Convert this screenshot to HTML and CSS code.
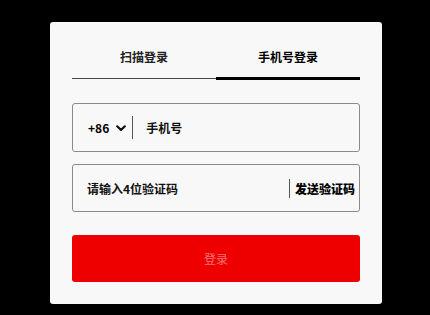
FILE: index.html
```html
<!DOCTYPE html>
<html lang="zh-CN">
<head>
<meta charset="utf-8">
<link rel="stylesheet" href="styles.css">
</head>
<body>
<div class="card">
  <div class="tabs">
    <div class="tab">扫描登录</div>
    <div class="tab active">手机号登录</div>
  </div>
  <div class="field phone">
    <span class="code">+86</span>
    <svg class="chev" width="10" height="7" viewBox="0 0 10 7"><path d="M1.2 1.3 L5 5 L8.8 1.3" fill="none" stroke="#111" stroke-width="2.2" stroke-linecap="round" stroke-linejoin="round"/></svg>
    <span class="divider tall"></span>
    <span class="ph">手机号</span>
  </div>
  <div class="field sms">
    <span class="ph grow">请输入4位验证码</span>
    <span class="divider"></span>
    <span class="send">发送验证码</span>
  </div>
  <div class="btn">登录</div>
</div>
</body>
</html>
```
FILE: styles.css
```css
html, body {
  margin: 0;
  padding: 0;
  background: #000;
}
body {
  width: 430px;
  height: 315px;
  overflow: hidden;
  font-family: "Noto Sans CJK SC", "Noto Sans", sans-serif;
  font-size: 12px;
  color: #111;
}
.card {
  box-sizing: border-box;
  margin: 22px 0 0 50px;
  width: 332px;
  height: 282px;
  background: #f8f8f8;
  border-radius: 3px;
  padding: 0 22px;
}
.tabs {
  display: flex;
  align-items: flex-end;
  height: 58px;
}
.tab {
  flex: 1;
  text-align: center;
  font-weight: 700;
  line-height: 20px;
  color: #222;
  height: 57px;
  box-sizing: border-box;
  padding-top: 25px;
  border-bottom: 1px solid #4a4a4a;
  margin-bottom: 1px;
}
.tab.active {
  color: #000;
  border-bottom: 3px solid #000;
  margin-bottom: 0;
  height: 58px;
}
.field {
  box-sizing: border-box;
  display: flex;
  align-items: center;
  height: 48px;
  border: 1px solid #8a8a8a;
  border-radius: 3px;
  font-weight: 700;
}
.phone {
  margin-top: 23px;
  height: 49px;
  padding-left: 15px;
}
.sms {
  margin-top: 12px;
  padding-left: 14px;
}
.code {
  color: #000;
}
.chev {
  margin-left: 7px;
  margin-top: 1px;
}
.divider {
  width: 1px;
  height: 19px;
  background: #555;
}
.divider.tall {
  height: 23px;
  margin-left: 6px;
  margin-right: 13px;
}
.grow {
  flex: 1;
}
.send {
  margin-left: 5px;
  margin-right: 4px;
  color: #000;
  font-weight: 900;
  white-space: nowrap;
}
.btn {
  margin-top: 23px;
  height: 47px;
  background: #ee0000;
  border-radius: 3px;
  display: flex;
  align-items: center;
  justify-content: center;
  color: rgba(255, 255, 255, 0.45);
  font-size: 12px;
}
```
